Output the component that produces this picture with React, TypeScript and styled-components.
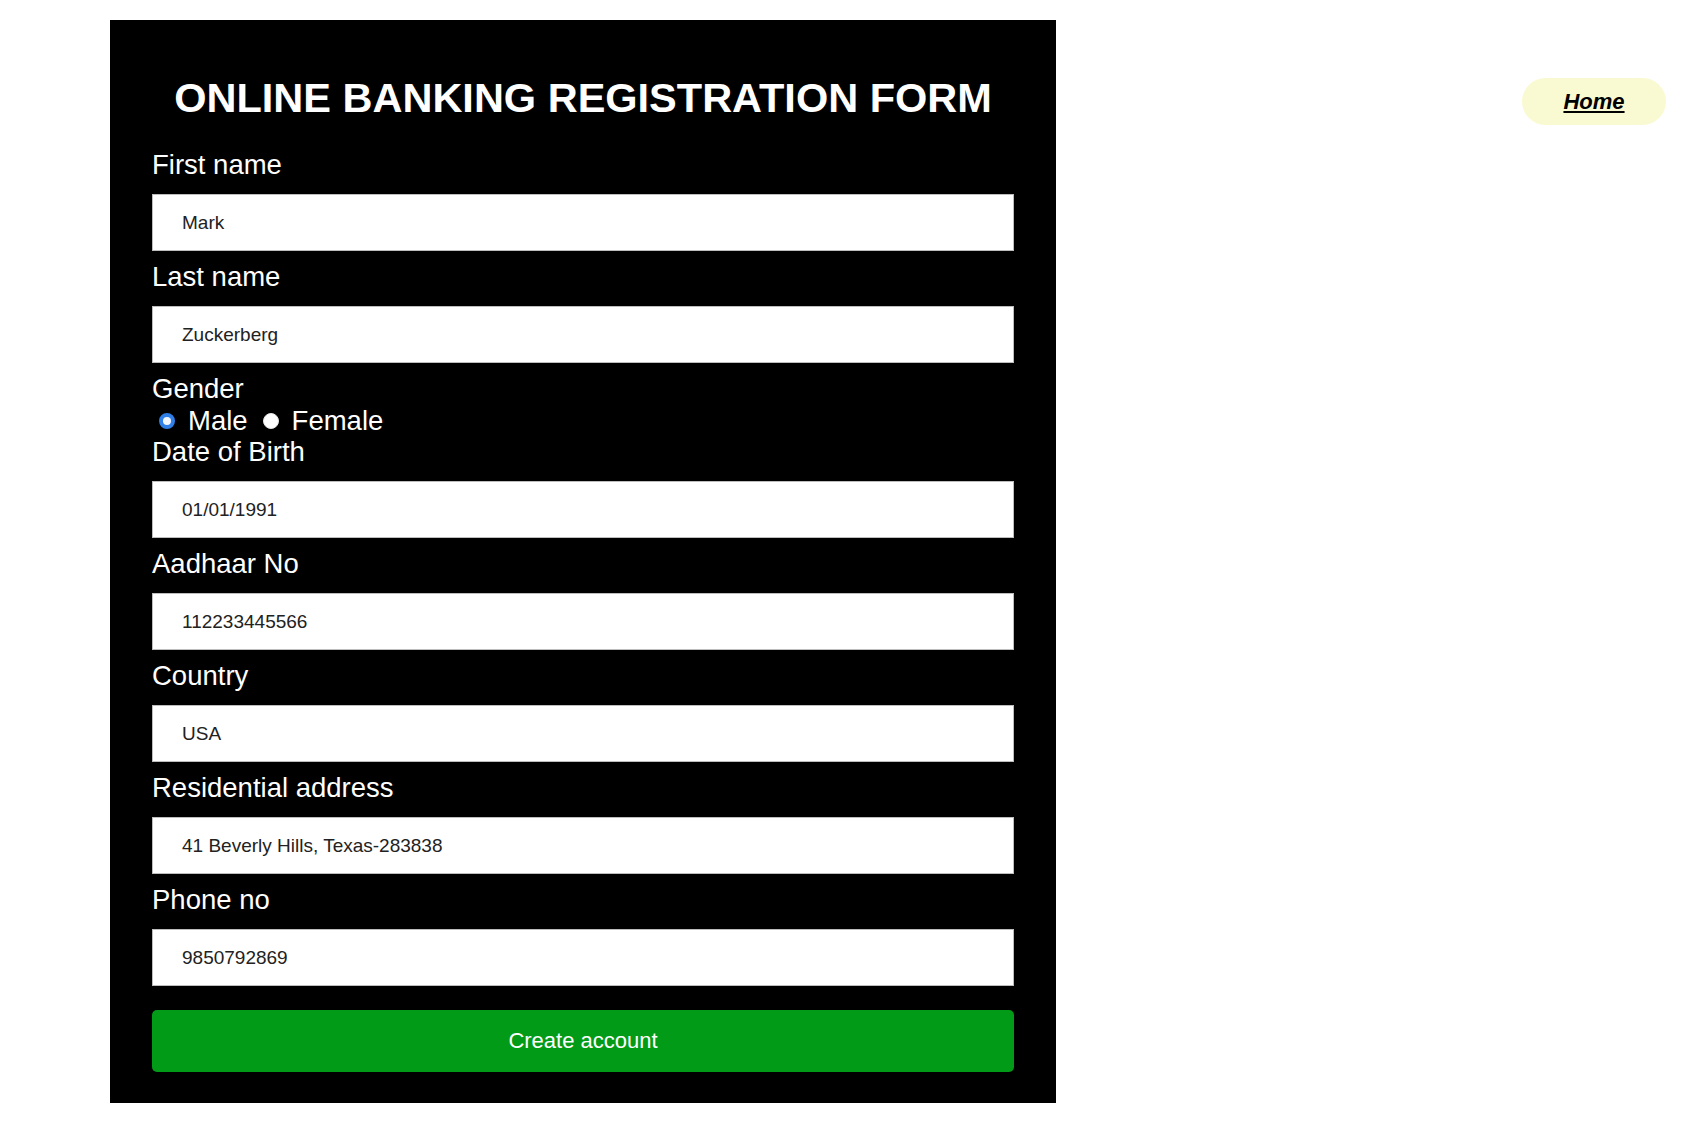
import React from "react";
import styled, { createGlobalStyle } from "styled-components";

const GlobalStyle = createGlobalStyle`
  html, body {
    margin: 0;
    padding: 0;
    background: #ffffff;
    font-family: "Liberation Sans", Arial, sans-serif;
  }
  * { box-sizing: border-box; }
`;

const Page = styled.div`
  width: 1690px;
  min-height: 1136px;
  display: flex;
  justify-content: space-between;
  align-items: flex-start;
  padding: 20px 24px 0 110px;
`;

const Panel = styled.form`
  width: 946px;
  background: #000000;
  padding: 54px 42px 31px;
  display: flex;
  flex-direction: column;
`;

const Title = styled.h1`
  margin: 0 0 18px;
  color: #ffffff;
  font-size: 41.5px;
  line-height: 47px;
  font-weight: 700;
  text-align: center;
`;

const Label = styled.label<{ $flush?: "top" | "bottom" }>`
  display: block;
  color: #ffffff;
  font-size: 27.5px;
  line-height: 31px;
  margin-top: ${(p) => (p.$flush === "top" ? "0" : "10px")};
  margin-bottom: ${(p) => (p.$flush === "bottom" ? "0" : "14px")};
`;

const Field = styled.input`
  display: block;
  width: 100%;
  height: 57px;
  border: 1px solid #bdbdbd;
  background: #ffffff;
  padding: 0 0 0 29px;
  font-family: "Liberation Sans", Arial, sans-serif;
  font-size: 19px;
  color: #222222;
  outline: none;
`;

const RadioRow = styled.div`
  display: flex;
  align-items: center;
  height: 32px;
  color: #ffffff;
  font-size: 27.5px;
  line-height: 31px;
`;

const Radio = styled.input.attrs({ type: "radio" })<{ $first?: boolean }>`
  appearance: none;
  -webkit-appearance: none;
  width: 16px;
  height: 16px;
  margin: 2px 13px 0 ${(p) => (p.$first ? "7px" : "15px")};
  border-radius: 50%;
  background: #ffffff;
  border: 1px solid #e6e6e6;
  flex: none;
  &:checked {
    border: 4px solid #2f7fe6;
    background: #f2f7ff;
  }
`;

const RadioText = styled.span`
  display: inline-block;
`;

const SubmitButton = styled.button`
  margin-top: 24px;
  width: 100%;
  height: 62px;
  border: none;
  border-radius: 5px;
  background: #029b18;
  color: #ffffff;
  font-family: "Liberation Sans", Arial, sans-serif;
  font-size: 22px;
  cursor: pointer;
`;

const HomePill = styled.a`
  margin-top: 58px;
  width: 144px;
  height: 47px;
  border-radius: 24px;
  background: #fafad2;
  display: flex;
  align-items: center;
  justify-content: center;
  color: #000000;
  font-size: 22px;
  font-weight: 700;
  font-style: italic;
  text-decoration: underline;
`;

const fields: { label: string; value: string }[] = [
  { label: "Date of Birth", value: "01/01/1991" },
  { label: "Aadhaar No", value: "112233445566" },
  { label: "Country", value: "USA" },
  { label: "Residential address", value: "41 Beverly Hills, Texas-283838" },
  { label: "Phone no", value: "9850792869" },
];

export default function App() {
  return (
    <>
      <GlobalStyle />
      <Page>
        <Panel onSubmit={(e) => e.preventDefault()}>
          <Title>ONLINE BANKING REGISTRATION FORM</Title>
          <Label>First name</Label>
          <Field defaultValue="Mark" />
          <Label>Last name</Label>
          <Field defaultValue="Zuckerberg" />
          <Label $flush="bottom">Gender</Label>
          <RadioRow>
            <Radio $first name="gender" defaultChecked />
            <RadioText>Male</RadioText>
            <Radio name="gender" />
            <RadioText>Female</RadioText>
          </RadioRow>
          {fields.map((f, i) => (
            <React.Fragment key={f.label}>
              <Label $flush={i === 0 ? "top" : undefined}>{f.label}</Label>
              <Field defaultValue={f.value} />
            </React.Fragment>
          ))}
          <SubmitButton type="submit">Create account</SubmitButton>
        </Panel>
        <HomePill href="#">Home</HomePill>
      </Page>
    </>
  );
}
